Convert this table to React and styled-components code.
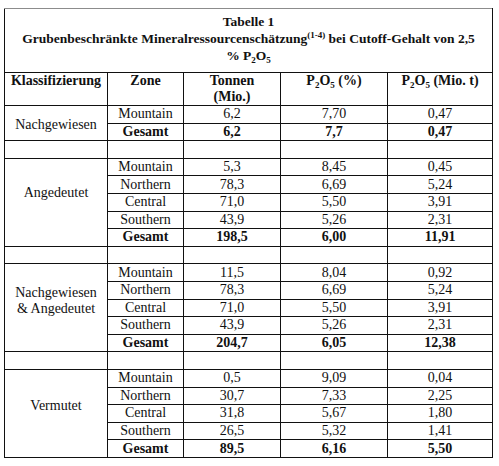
import React from "react";
import styled, { createGlobalStyle } from "styled-components";

const GlobalStyle = createGlobalStyle`
  body {
    margin: 0;
    background: #ffffff;
    font-family: "Liberation Serif", "Times New Roman", serif;
    color: #111;
  }
`;

const Page = styled.div`
  padding: 8px 0 0 4px;
`;

const Table = styled.table`
  width: 488px;
  table-layout: fixed;
  border-collapse: collapse;
  font-size: 14px;
  line-height: 16px;
  border-top: 1px solid #8c8c8c;
  border-right: 1px solid #8c8c8c;
  border-left: 1px solid #111;
  border-bottom: 1px solid #111;
`;

const TitleCell = styled.th`
  height: 59px;
  padding: 4px 0 0;
  vertical-align: top;
  font-weight: bold;
  font-size: 13.5px;
  line-height: 17px;
  text-align: center;
  border: 1px solid #111;
  border-top-color: #8c8c8c;
`;

const HeadCell = styled.th`
  height: 31px;
  padding: 0;
  vertical-align: top;
  font-weight: bold;
  text-align: center;
  border: 1px solid #111;
`;

const Row = styled.tr`
  height: 17.6px;
`;

const Cell = styled.td`
  padding: 0;
  text-align: center;
  vertical-align: middle;
  font-weight: ${(p) => (p.$bold ? "bold" : "normal")};
  border: 1px solid #111;
`;

const ClassCell = styled.td`
  padding: ${(p) => p.$top || 0}px 0 ${(p) => p.$lift || 0}px;
  text-align: center;
  vertical-align: middle;
  border: 1px solid #111;
`;

const Sub = styled.sub`
  font-size: 9px;
  line-height: 0;
  vertical-align: -3px;
`;

const Sup = styled.sup`
  font-size: 9px;
  line-height: 0;
  vertical-align: 5px;
`;

const P2O5 = () => (
  <>
    P<Sub>2</Sub>O<Sub>5</Sub>
  </>
);

const groups = [
  {
    name: ["Nachgewiesen"],
    top: 4,
    lift: 0,
    rows: [
      ["Mountain", "6,2", "7,70", "0,47"],
      ["Gesamt", "6,2", "7,7", "0,47"],
    ],
  },
  {
    name: ["Angedeutet"],
    lift: 18,
    rows: [
      ["Mountain", "5,3", "8,45", "0,45"],
      ["Northern", "78,3", "6,69", "5,24"],
      ["Central", "71,0", "5,50", "3,91"],
      ["Southern", "43,9", "5,26", "2,31"],
      ["Gesamt", "198,5", "6,00", "11,91"],
    ],
  },
  {
    name: ["Nachgewiesen", "& Angedeutet"],
    lift: 14,
    rows: [
      ["Mountain", "11,5", "8,04", "0,92"],
      ["Northern", "78,3", "6,69", "5,24"],
      ["Central", "71,0", "5,50", "3,91"],
      ["Southern", "43,9", "5,26", "2,31"],
      ["Gesamt", "204,7", "6,05", "12,38"],
    ],
  },
  {
    name: ["Vermutet"],
    lift: 14,
    rows: [
      ["Mountain", "0,5", "9,09", "0,04"],
      ["Northern", "30,7", "7,33", "2,25"],
      ["Central", "31,8", "5,67", "1,80"],
      ["Southern", "26,5", "5,32", "1,41"],
      ["Gesamt", "89,5", "6,16", "5,50"],
    ],
  },
];

function Group({ group }) {
  return group.rows.map((r, i) => {
    const bold = r[0] === "Gesamt";
    return (
      <Row key={i}>
        {i === 0 && (
          <ClassCell
            rowSpan={group.rows.length}
            $top={group.top}
            $lift={group.lift}
          >
            {group.name.map((n, j) => (
              <div key={j}>{n}</div>
            ))}
          </ClassCell>
        )}
        {r.map((v, j) => (
          <Cell key={j} $bold={bold}>
            {v}
          </Cell>
        ))}
      </Row>
    );
  });
}

function Spacer() {
  return (
    <Row>
      <Cell />
      <Cell />
      <Cell />
      <Cell />
      <Cell />
    </Row>
  );
}

export default function App() {
  return (
    <Page>
      <GlobalStyle />
      <Table>
        <colgroup>
          <col style={{ width: 103 }} />
          <col style={{ width: 76 }} />
          <col style={{ width: 97 }} />
          <col style={{ width: 107 }} />
          <col style={{ width: 105 }} />
        </colgroup>
        <thead>
          <tr>
            <TitleCell colSpan={5}>
              Tabelle 1
              <br />
              Grubenbeschränkte Mineralressourcenschätzung<Sup>(1-4)</Sup> bei
              Cutoff-Gehalt von 2,5
              <br />% <P2O5 />
            </TitleCell>
          </tr>
          <tr>
            <HeadCell>Klassifizierung</HeadCell>
            <HeadCell>Zone</HeadCell>
            <HeadCell>
              Tonnen
              <br />
              (Mio.)
            </HeadCell>
            <HeadCell>
              <P2O5 /> (%)
            </HeadCell>
            <HeadCell>
              <P2O5 /> (Mio. t)
            </HeadCell>
          </tr>
        </thead>
        <tbody>
          {groups.map((g, i) => (
            <React.Fragment key={i}>
              {i > 0 && <Spacer />}
              <Group group={g} />
            </React.Fragment>
          ))}
        </tbody>
      </Table>
    </Page>
  );
}
